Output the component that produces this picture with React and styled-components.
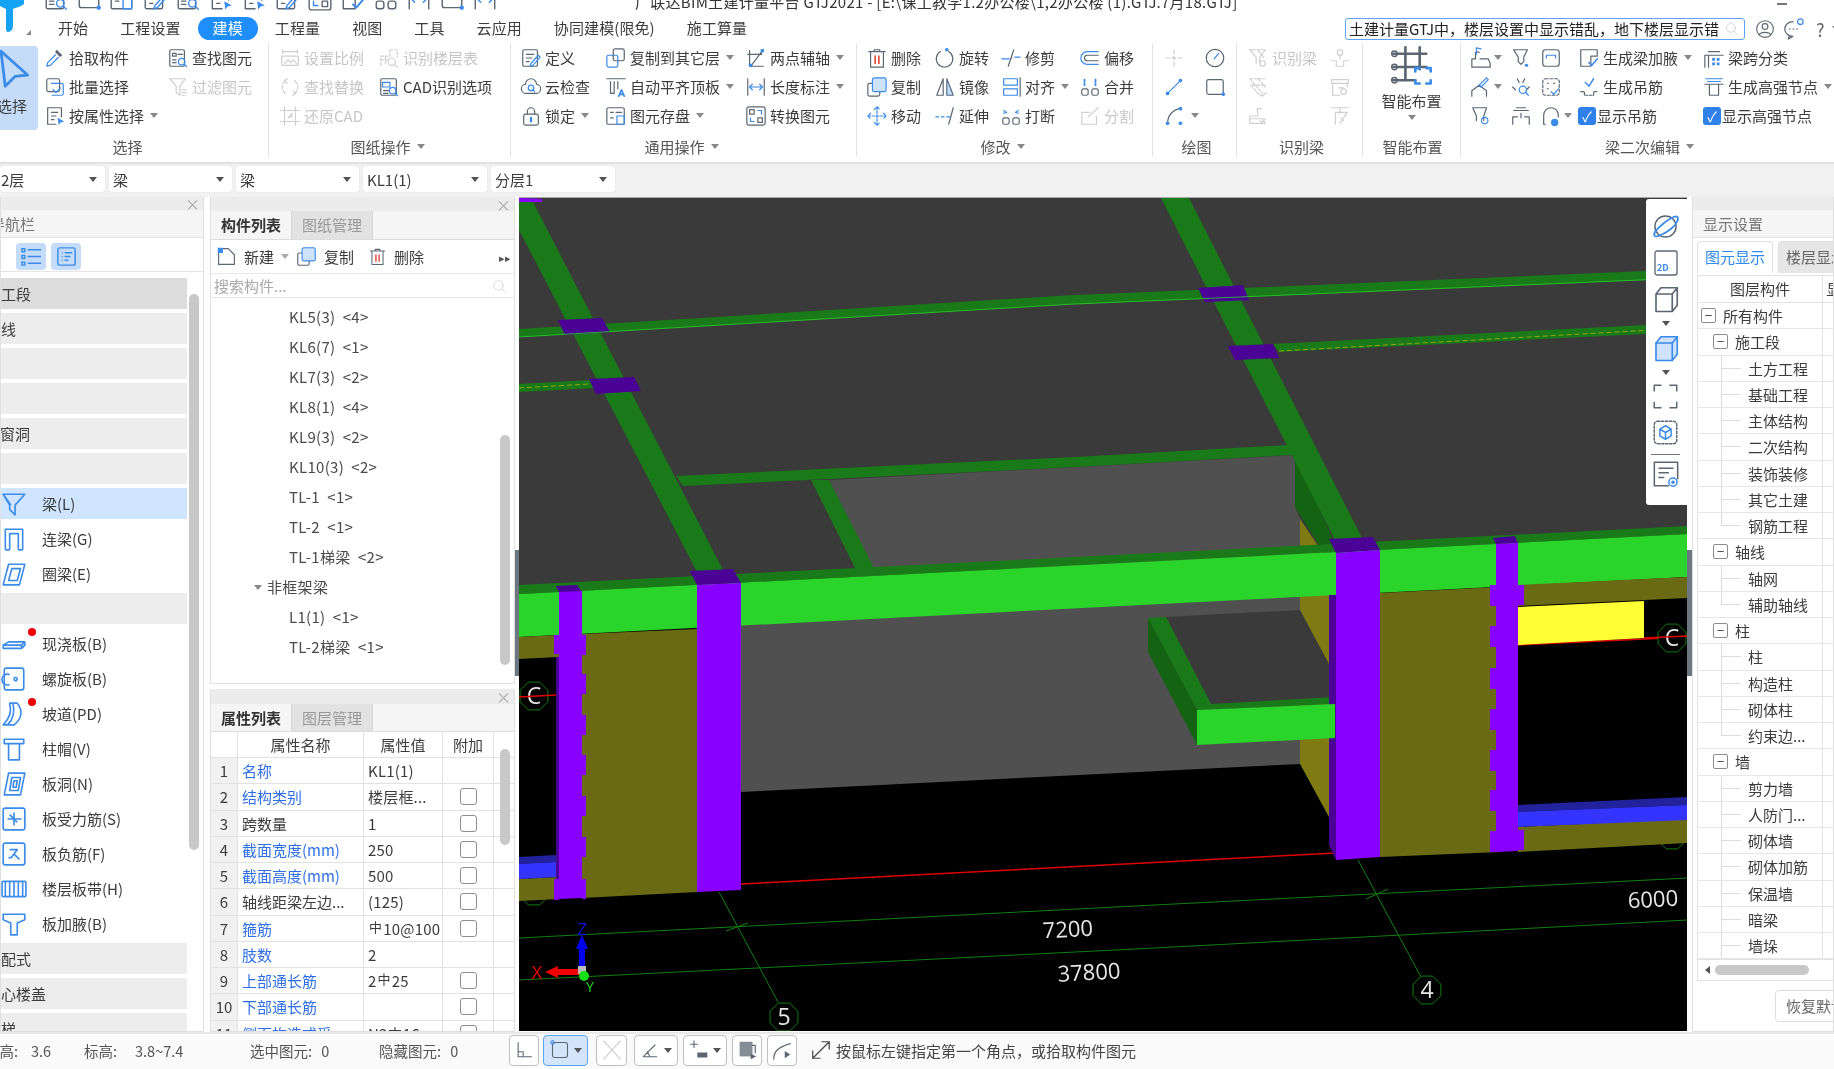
import React from 'react'
import styled, { createGlobalStyle } from 'styled-components'

const GlobalStyle = createGlobalStyle`
  html, body { margin: 0; padding: 0; background: #fff; }
  body { font-family: "Noto Sans CJK SC", "Noto Sans", sans-serif; font-size: 15px; color: #3c3c3c; }
  * { box-sizing: border-box; }
`

const Page = styled.div`
  width: 1834px;
  height: 1069px;
  overflow: hidden;
  position: relative;
  display: flex;
  flex-direction: column;
  background: #fff;
  filter: blur(0.35px);
`

/* ---------- icons ---------- */
const Svg = styled.svg`
  width: ${(p) => p.$s || 22}px;
  height: ${(p) => p.$s || 22}px;
  flex: none;
  fill: none;
  stroke: currentColor;
  stroke-width: 1.3;
  stroke-linecap: round;
  stroke-linejoin: round;
  color: ${(p) => (p.$off ? '#cfcfcf' : '#5b6672')};
  --b: ${(p) => (p.$off ? '#cfcfcf' : '#3b8bea')};
  .b { stroke: var(--b); }
  .f { fill: var(--b); stroke: none; }
  .l { fill: ${(p) => (p.$off ? '#eee' : '#cfe2fb')}; }
  .r { stroke: #e0463c; }
  .d { fill: currentColor; stroke: none; }
`

const icons = {
  pick: <><path d="M14 3l6 6-2.5 2-5.5-5.5z" className="d" /><path className="b" d="M12.5 8.5L4 17l-1 4 4-1 8.5-8.5" /></>,
  batch: <><rect x="3" y="3" width="14" height="14" rx="2" /><path className="b" d="M8 8h11a2 2 0 012 2v9a2 2 0 01-2 2H9M10 15l3 3 5-5" /></>,
  attr: <><path d="M4 3h15v10M4 3v18h9M8 8h7M8 12h5M8 16h3" /><path className="f" d="M15 14l7 4-4 1-2 3z" /></>,
  findel: <><rect x="3" y="3" width="16" height="18" rx="1.5" /><rect x="6" y="7" width="4" height="3" /><path d="M12 8h5M6 14h4M6 17h4" /><circle className="b" cx="16" cy="16" r="3.5" /><path className="b" d="M19 19l2.5 2.5" /></>,
  filter: <><path d="M3 3h17l-6 8v10l-4-3v-7z" /><path d="M16 15h5M16 18h5M16 21h4" /></>,
  scale: <><path d="M4 5h16M4 3v4M20 3v4M3 10h18v10H3z" /><path d="M6 18l4-4 3 3 3-3 3 4" /></>,
  floortab: <><path d="M3 20V10h10V3M3 14h10M8 10v10M13 3h8v8" strokeDasharray="3 2" /><circle cx="15" cy="16" r="4" /><path d="M18 19l3 3" /></>,
  replace: <><path d="M7 5a9 9 0 000 14M17 5a9 9 0 010 14" strokeDasharray="4 2" /><path d="M9 3L6 5l3 3M15 21l3-2-3-3" /></>,
  cadopt: <><rect x="3" y="3" width="17" height="18" rx="1.5" /><path className="b" d="M5 7h8v5H5z" /><path d="M6 16h6M6 19h5" /><circle className="b" cx="16" cy="16" r="3.5" /><path className="b" d="M19 19l2.5 2.5" /></>,
  cadback: <><path d="M6 2v20M18 2v20M2 6h20M2 18h20" /><path d="M10 14l4-5v4h-3" /></>,
  define: <><rect x="3" y="3" width="16" height="18" rx="1.5" /><path d="M7 8h8M7 12h6M7 16h3" /><path className="b" d="M20 9l-8 9-1 3 3-1 8-9z" /></>,
  cloud: <><path d="M7 19a5 5 0 01-1-10 6 6 0 0112 0 5 5 0 01-1 10z" /><circle className="b" cx="12" cy="13" r="3" /><path className="b" d="M14 15l2 2" /></>,
  lock: <><rect x="4" y="10" width="16" height="12" rx="2" /><path d="M8 10V7a4 4 0 018 0v3" /><path className="b" d="M12 14v4" strokeWidth="2.5" /></>,
  copyfloor: <><rect className="b" x="2" y="9" width="12" height="13" rx="2" /><rect x="9" y="2" width="12" height="13" rx="2" /></>,
  autoflat: <><path d="M2 3h20M6 6v13h4V6M14 6v8" /><path className="b" d="M15 22l3-7 3 7M16 20h4" strokeWidth="1.8" /></>,
  saveel: <><rect x="2" y="3" width="19" height="18" rx="1.5" /><path d="M6 8h3M12 8h6M6 14h3" /><rect className="b" x="13" y="12" width="8" height="9" /></>,
  twoaxis: <><path d="M5 4v17h15M3 8h15V3M7 20L19 4" /><circle className="f" cx="19" cy="4" r="2" /><circle className="f" cx="6" cy="20" r="2" /></>,
  dim: <><path d="M3 3v18M21 3v18" /><path className="b" d="M5 12h14M8 9l-3 3 3 3M16 9l3 3-3 3" /></>,
  convert: <><rect x="2" y="2" width="20" height="20" rx="2" /><rect x="5" y="5" width="5" height="5" /><rect x="14" y="14" width="5" height="5" /><path className="b" d="M14 6h4v4M10 18H6v-4" /></>,
  del: <><path d="M3 5h18M9 5V3h6v2M5 5v17h14V5" /><path className="r" d="M10 10v8M14 10v8" strokeWidth="1.8" /></>,
  rotate: <><path d="M16 5a9 9 0 11-9 0" /><circle className="f" cx="14" cy="3" r="2" /></>,
  trim: <><path className="b" d="M2 13h8M16 11h6" /><path d="M15 3L9 21M12 12h1" /></>,
  offset: <><path className="b" d="M21 5H9a7 7 0 000 14h12" /><path d="M21 9H9a3 3 0 000 6h12" /></>,
  copy: <><rect x="2" y="8" width="13" height="14" rx="2" /><rect className="b l" x="7" y="2" width="15" height="15" rx="2" /></>,
  mirror: <><path d="M10 3L3 21h7zM14 3l7 18h-7z" /><path className="f" d="M14 3l7 18h-7z" opacity=".3" /></>,
  align: <><rect className="b" x="4" y="3" width="15" height="7" /><rect className="b" x="4" y="14" width="15" height="7" /><path d="M22 2v20" /></>,
  merge: <><rect x="3" y="14" width="7" height="7" rx="2" /><rect x="14" y="14" width="7" height="7" rx="2" /><path className="b" d="M6 4v6M18 4v6" strokeWidth="2" strokeDasharray="2 2" /></>,
  move: <><path className="b" d="M12 2v20M2 12h20M9 5l3-3 3 3M9 19l3 3 3-3M5 9l-3 3 3 3M19 9l3 3-3 3" strokeDasharray="3 1.5" /></>,
  extend: <><path className="b" d="M2 13h3M8 13h3M14 13h3" /><path d="M21 3l-5 18" /></>,
  cutoff: <><rect x="3" y="14" width="7" height="7" rx="2" /><rect x="14" y="14" width="7" height="7" rx="2" /><path className="b" d="M4 6l3 2M20 6l-3 2M4 9l3-1M20 9l-3-1" /></>,
  split: <><path d="M19 12v9H3V8h9" /><path d="M21 3l-9 8-2 2" /></>,
  cross: <><path d="M12 3v5M12 16v5M3 12h5M16 12h5" /><circle cx="12" cy="12" r="2" className="d" /></>,
  gauge: <><circle cx="12" cy="12" r="9.5" /><path className="b" d="M11 13l5-6" /></>,
  line: <><path className="b" d="M5 19L19 5" /><circle className="f" cx="5" cy="19" r="2" /><circle className="f" cx="19" cy="5" r="2" /></>,
  rect: <><rect x="3" y="4" width="18" height="16" rx="2" /><circle className="f" cx="21" cy="20" r="2" /></>,
  arc: <><path d="M5 20C5 11 11 5 19 4" /><circle className="f" cx="5" cy="20" r="2" /><circle className="f" cx="19" cy="4" r="2" /><circle className="f" cx="19" cy="20" r="2" /></>,
  idbeam: <><path d="M3 3h17l-6 8v6M3 3l7 8v7M12 4l6 7" /><circle cx="17" cy="18" r="3" /></>,
  idb2: <><path d="M3 3h17M6 10h14M3 3l14 16M12 3l8 9M4 10l9 10" strokeDasharray="3 2" /><path d="M14 20l3 2 4-4" /></>,
  idb3: <><path d="M3 20v-8h9l-1-8 5 0M3 15h14l3 5H3M14 17l2 2 4-4" /></>,
  hook: <><circle cx="12" cy="6" r="3" /><path d="M3 15h5v6h8v-6h5" strokeDasharray="3 1.5" /><path d="M12 9v4" /></>,
  boxq: <><path d="M3 4h18v4H3zM4 8v13h8M20 8v4M10 13h6" /><circle cx="16" cy="17" r="3" /></>,
  tdraw: <><path d="M3 3h18M12 3v6M7 8v13M7 8h13l-4 6-4 6" /><path d="M13 14l3 3" /></>,
  gen1: <><path d="M2 22v-9h4V6a4 4 0 014 0M11 13h9l2 5v4H2" /><path className="b" d="M7 1v7M7 1l5 1" /></>,
  gen2: <><path d="M2 22v-6l8-6 8 6v6" /><path className="b" d="M10 10l8-8 2 2-8 8z" /></>,
  gen3: <><path d="M4 3h15l-4 8v5l-3 3-3-3v-5z" /><circle cx="18" cy="20" r="1.8" className="f" /></>,
  gen4: <><rect x="3" y="3" width="18" height="18" rx="3" /><path className="b" d="M7 9h10M7 9v3M17 9v3" /></>,
  gen5: <><path d="M3 12l3 3M21 12l-3 3M8 3l2 4M16 3l-2 4" /><circle className="b" cx="14" cy="15" r="4" /><path className="b" d="M17 18l3 3" /></>,
  gen6: <><rect x="3" y="3" width="18" height="18" rx="3" strokeDasharray="3 2" /><path d="M8 8h1M15 8h1M8 14h1" /><path className="b" d="M12 17l3 3 5-6" /></>,
  gen7: <><path d="M3 3h15l-3 9v5M3 3l4 9v5" /><circle className="b" cx="16" cy="17" r="3.5" /></>,
  gen8: <><path d="M4 6h16M7 3h10M3 21v-8h5M21 21v-8h-5M12 9v5" /></>,
  gen9: <><path d="M4 21V11a8 8 0 0116 0v2M4 21h2" /><circle className="f" cx="16" cy="19" r="4" /></>,
  haunch: <><path d="M3 3h18v7h-7v11H3z" /><path className="b" d="M12 17l3 3 6-7" strokeWidth="1.8" /></>,
  genhang: <><path d="M3 17h4v4h10v-4h4" strokeDasharray="3 1.5" /><path className="b" d="M8 7l4 4 5-8" strokeWidth="1.6" /></>,
  span: <><path d="M2 22V9h20M6 5h12M6 9v13" /><path className="f" d="M10 12h3v3h-3zM15 12h3v3h-3zM10 17h3v3h-3zM15 17h3v3h-3z" /></>,
  strong: <><path className="b" d="M3 3h18M5 6h14" /><path d="M2 9h20M7 9v12h10V9" /></>,
  logoCube: <><path d="M4 8l4-5h13v14l-4 5H4zM4 8h13v14M17 8l4-5" /></>,
}

const Icon = ({ name, off, s }) => (
  <Svg viewBox="0 0 24 24" $off={off} $s={s}>{icons[name]}</Svg>
)

/* ---------- title + menu ---------- */
const TitleBar = styled.div`
  height: 17px;
  flex: none;
  overflow: hidden;
  display: flex;
  background: #fff;
  padding-left: 43px;
`
const QuickIcons = styled.div`
  display: flex;
  gap: 7px;
  margin-top: -14px;
  width: 592px;
  flex: none;
  color: #5b6672;
`
const TitleText = styled.div`
  margin-top: -9px;
  font-size: 15px;
  letter-spacing: 0.28px;
  white-space: nowrap;
  flex: 1;
  color: #333;
`
const Minimize = styled.div`
  width: 10px;
  height: 2px;
  background: #777;
  margin: 3px 47px 0 0;
`
const LogoMark = styled.svg`
  position: absolute;
  left: 0;
  top: 0;
  width: 24px;
  height: 34px;
`
const LogoCorner = styled.span`
  position: absolute;
  left: 26px;
  top: 30px;
  border-left: 5px solid transparent;
  border-bottom: 5px solid #888;
`
const Menu = styled.div`
  height: 23px;
  flex: none;
  display: flex;
  align-items: center;
  padding-left: 42px;
  background: #fff;
`
const MenuTab = styled.div`
  height: 23px;
  padding: 0 15px;
  margin: 0 1px;
  line-height: 22px;
  letter-spacing: 0.1px;
  border-radius: 12px;
  white-space: nowrap;
  color: ${(p) => (p.$on ? '#fff' : '#3c3c3c')};
  background: ${(p) => (p.$on ? '#1e8efb' : 'transparent')};
`
const SearchBox = styled.div`
  margin-left: auto;
  width: 400px;
  height: 22px;
  border: 1.5px solid #5aa5f5;
  border-radius: 3px;
  display: flex;
  align-items: center;
  padding: 0 5px 0 3px;
  color: #222;
  overflow: hidden;
  white-space: nowrap;
  justify-content: space-between;
`
const SearchText = styled.span`
  overflow: hidden;
  width: 370px;
`
const MenuIcons = styled.div`
  width: 89px;
  flex: none;
  display: flex;
  align-items: center;
  gap: 7px;
  padding-left: 10px;
  color: #666;
`
const HelpMark = styled.span`
  margin-left: 5px;
  font-size: 18px;
`

/* ---------- ribbon ---------- */
const Ribbon = styled.div`
  height: 124px;
  flex: none;
  display: flex;
  background: #fff;
  border-bottom: 2px solid #e2e2e2;
`
const GroupBox = styled.div`
  width: ${(p) => p.$w}px;
  flex: none;
  display: flex;
  flex-direction: column;
  position: relative;
  border-right: ${(p) => (p.$last ? 'none' : '1.5px solid #e4e4e4')};
  margin: 3px 0 5px;
`
const GroupBody = styled.div`
  height: 90px;
  flex: none;
  display: flex;
  padding-left: ${(p) => p.$pad || 0}px;
  align-items: flex-start;
`
const GroupTitle = styled.div`
  flex: 1;
  display: flex;
  align-items: center;
  justify-content: center;
  gap: 6px;
  padding-top: 2px;
  padding-right: ${(p) => Math.max(p.$shift || 0, 0)}px;
  padding-left: ${(p) => Math.max(-(p.$shift || 0), 0)}px;
  color: #555;
`
const Caret = styled.span`
  display: inline-block;
  width: 0;
  height: 0;
  flex: none;
  border-left: 4px solid transparent;
  border-right: 4px solid transparent;
  border-top: 5px solid ${(p) => p.$c || '#888'};
`
const Col = styled.div`
  width: ${(p) => p.$w}px;
  flex: none;
  display: flex;
  flex-direction: column;
`
const ToolRow = styled.div`
  height: 29px;
  display: flex;
  align-items: center;
  gap: ${(p) => p.$gap ?? 3}px;
  white-space: nowrap;
  color: ${(p) => (p.$off ? '#c6c6c6' : '#3c3c3c')};
`
const BigSelect = styled.div`
  width: 38px;
  height: 84px;
  margin: 3px 6px 0 0;
  background: #c4dcf7;
  border-radius: 0 4px 4px 0;
  display: flex;
  flex-direction: column;
  align-items: center;
  overflow: hidden;
  padding-top: 1px;
  white-space: nowrap;
`
const BigLabel = styled.div`
  margin-top: 6px;
  margin-left: -14px;
`
const BigTool = styled.div`
  width: 100%;
  height: 90px;
  display: flex;
  flex-direction: column;
  align-items: center;
`
const BigToolLabel = styled.div`
  margin-top: 1px;
  line-height: 22px;
`
const CheckBox = styled.span`
  width: 18px;
  height: 18px;
  border-radius: 3px;
  background: #2f80e8;
  color: #fff;
  font-size: 14px;
  line-height: 18px;
  text-align: center;
  flex: none;
`

const Tool = ({ icon, label, caret, off }) => (
  <ToolRow $off={off}>
    <Icon name={icon} off={off} />
    {label && <span>{label}</span>}
    {caret && <Caret style={{ marginLeft: 3 }} />}
  </ToolRow>
)

const Group = ({ w, title, pad, shift, caret, last, children }) => (
  <GroupBox $w={w} $last={last}>
    <GroupBody $pad={pad}>{children}</GroupBody>
    <GroupTitle $shift={shift}>
      {title}
      {caret && <Caret />}
    </GroupTitle>
  </GroupBox>
)

/* ---------- selectors ---------- */
const SelectorBar = styled.div`
  height: 33px;
  flex: none;
  background: #f1f1f1;
  display: flex;
  gap: 4px;
  padding-top: 2px;
  align-items: flex-start;
`
const Selector = styled.div`
  width: ${(p) => p.$w}px;
  height: 26px;
  background: #fff;
  border-radius: 3px;
  display: flex;
  align-items: center;
  justify-content: space-between;
  padding: 0 8px 0 ${(p) => p.$pl ?? 4}px;
  box-shadow: 0 0 1px #ccc;
`

/* ---------- main ---------- */
const Main = styled.div`
  flex: 1;
  min-height: 0;
  display: flex;
  background: #fff;
`
const Panel = styled.div`
  width: ${(p) => p.$w}px;
  flex: ${(p) => (p.$grow ? 1 : 'none')};
  ${(p) => p.$h && `height: ${p.$h}px;`}
  min-height: 0;
  position: relative;
  overflow: hidden;
  display: flex;
  flex-direction: column;
  border: 1px solid #e0e0e0;
  border-top: none;
  background: #fff;
`
const Strip = styled.div`
  height: ${(p) => p.$h || 13}px;
  flex: none;
  background: #ececec;
  display: flex;
  justify-content: flex-end;
  align-items: center;
  padding-right: 3px;
  color: #a8a8a8;
  font-size: 15px;
  line-height: 13px;
`
const PanelHead = styled.div`
  height: 28px;
  flex: none;
  background: #f5f5f5;
  line-height: 28px;
  padding-left: ${(p) => p.$pl ?? 0}px;
  text-indent: ${(p) => p.$indent ?? 0}px;
  white-space: nowrap;
  color: #777;
  border-bottom: 1px solid #e4e4e4;
`
const Tabs = styled.div`
  height: ${(p) => p.$h || 29}px;
  flex: none;
  display: flex;
  background: #f5f5f5;
  border-bottom: 1px solid #ddd;
`
const Tab = styled.div`
  width: 81px;
  text-align: center;
  line-height: 28px;
  font-weight: ${(p) => (p.$on ? 700 : 400)};
  color: ${(p) => (p.$on ? '#333' : '#999')};
  background: ${(p) => (p.$on ? '#f5f5f5' : '#e2e2e2')};
  border-right: 1px solid #d6d6d6;
`
const ScrollThumb = styled.div`
  position: absolute;
  top: ${(p) => p.$top}px;
  right: ${(p) => p.$right}px;
  width: 10px;
  height: ${(p) => p.$h}px;
  background: #c8c8c8;
  border-radius: 5px;
`
const ViewRow = styled.div`
  height: 34px;
  flex: none;
  display: flex;
  gap: 5px;
  padding: 5px 0 0 15px;
  border-bottom: 1px solid #e4e4e4;
`
const ViewBtn = styled.div`
  width: 30px;
  height: 27px;
  background: #c4dcf7;
  border-radius: 4px;
  display: flex;
  align-items: center;
  justify-content: center;
`
const NavList = styled.div`
  flex: 1;
  min-height: 0;
  padding-top: 6px;
`
const NavBand = styled.div`
  width: 186px;
  height: 31px;
  margin-bottom: 4px;
  background: ${(p) => (p.$dark ? '#dcdcdc' : '#ededed')};
  line-height: 31px;
  text-indent: ${(p) => p.$indent || 0}px;
  white-space: nowrap;
  overflow: hidden;
`
const NavItem = styled.div`
  width: 186px;
  height: 31px;
  margin-bottom: 4px;
  display: flex;
  align-items: center;
  gap: 15px;
  position: relative;
  background: ${(p) => (p.$on ? '#cfe5ff' : 'transparent')};
`
const RedDot = styled.span`
  position: absolute;
  left: 27px;
  top: 0;
  width: 8px;
  height: 8px;
  border-radius: 50%;
  background: #ee0000;
`
const CompToolbar = styled.div`
  height: 34px;
  flex: none;
  display: flex;
  align-items: center;
  padding-left: 5px;
  border-bottom: 1px solid #e8e8e8;
  position: relative;
`
const CompBtn = styled.div`
  display: flex;
  align-items: center;
  gap: 7px;
  width: ${(p) => p.$w}px;
  flex: none;
`
const MoreBtn = styled.div`
  margin-left: auto;
  margin-right: 3px;
  width: 13px;
  height: 24px;
  color: #555;
  font-size: 11px;
  line-height: 24px;
  text-align: center;
  white-space: nowrap;
`
const CompSearch = styled.div`
  height: 24px;
  flex: none;
  display: flex;
  justify-content: space-between;
  align-items: center;
  padding: 0 8px 0 3px;
  color: #aaa;
  border-bottom: 1px solid #e4e4e4;
`
const CompList = styled.div`
  flex: 1;
  min-height: 0;
  padding-top: 4px;
`
const CompRow = styled.div`
  height: 30px;
  line-height: 30px;
  padding-left: ${(p) => (p.$head ? 43 : 78)}px;
  white-space: pre;
  letter-spacing: 0.3px;
  display: flex;
  align-items: center;
  gap: 5px;
  color: #4a4a4a;
`
const PropHead = styled.div`
  display: grid;
  grid-template-columns: 27px 126px 79px 51px;
  height: 26px;
  flex: none;
  text-align: center;
  line-height: 25px;
  border-bottom: 1px solid #e2e2e2;
  & > div { border-right: 1px solid #e2e2e2; }
`
const PropRow = styled.div`
  display: grid;
  grid-template-columns: 27px 126px 79px 51px;
  height: 26.25px;
  flex: none;
  line-height: 25px;
  border-bottom: 1px solid #e2e2e2;
`
const PropNum = styled.div`
  background: #f1f1f1;
  text-align: center;
  border-right: 1px solid #e2e2e2;
`
const PropName = styled.div`
  padding-left: 4px;
  white-space: nowrap;
  overflow: hidden;
  border-right: 1px solid #e2e2e2;
  color: ${(p) => (p.$link ? '#2f6fe6' : '#3c3c3c')};
`
const PropVal = styled.div`
  padding-left: 4px;
  white-space: nowrap;
  overflow: hidden;
  letter-spacing: 0.2px;
  border-right: 1px solid #e2e2e2;
`
const Rebar = styled.span`
  font-size: 13px;
  margin: 0 1px;
  position: relative;
  top: -3px;
`
const PropCheckCell = styled.div`
  border-right: 1px solid #e2e2e2;
  display: flex;
  align-items: center;
  justify-content: center;
`
const PropCheck = styled.span`
  width: 17px;
  height: 17px;
  border: 1.3px solid #8e8e8e;
  border-radius: 3px;
`
const MidColumn = styled.div`
  width: 305px;
  margin-left: 6px;
  flex: none;
  display: flex;
  flex-direction: column;
  gap: 5px;
`
const Splitter = styled.div`
  width: ${(p) => p.$w}px;
  flex: none;
  display: flex;
  align-items: center;
  padding-bottom: 4px;
`
const SplitGrip = styled.div`
  width: 100%;
  height: 126px;
  background: #6b7680;
`
const Viewport = styled.div`
  width: 1168px;
  flex: none;
  position: relative;
  background: #000;
  border-top: 1px solid #aaa;
  height: 834px;
`
const Scene = styled.svg`
  display: block;
  width: 1168px;
  height: 833px;
`
const SceneText = styled.text`
  font-family: "Open Sans", "Noto Sans", sans-serif;
  fill: ${(p) => p.$c || '#e6e6e6'};
  font-size: ${(p) => p.$s || 22}px;
  text-anchor: middle;
`
const FloatBar = styled.div`
  position: absolute;
  right: 0;
  top: 1px;
  width: 41px;
  height: 306px;
  background: #fff;
  border-radius: 3px 0 0 3px;
  display: flex;
  flex-direction: column;
  align-items: center;
  padding: 10px 2px 0 0;
`
const FloatSlot = styled.div`
  height: ${(p) => p.$h}px;
  display: flex;
  align-items: center;
  justify-content: center;
  flex: none;
`
const FloatRule = styled.div`
  width: 29px;
  height: 1px;
  flex: none;
  background: #777;
  margin: 3px 0;
`
const TreeWrap = styled.div`
  margin: 2px 0 0 4px;
  height: 684px;
  flex: none;
  border: 1px solid #e2e2e2;
  border-right: none;
  border-bottom: none;
  display: flex;
  flex-direction: column;
  overflow: hidden;
`
const TreeHead = styled.div`
  height: 27px;
  flex: none;
  display: flex;
  line-height: 26px;
  white-space: nowrap;
  border-bottom: 1px solid #e2e2e2;
`
const TreeCell = styled.div`
  width: 125px;
  flex: none;
  text-align: center;
  border-right: 1px solid #e2e2e2;
`
const TreeRow = styled.div`
  height: 26.25px;
  flex: none;
  display: flex;
  border-bottom: 1px solid #e6e6e6;
  position: relative;
  white-space: nowrap;
`
const TreeLabel = styled.div`
  width: 125px;
  flex: none;
  display: flex;
  align-items: center;
  gap: 7px;
  padding-left: ${(p) => p.$pl}px;
  line-height: 25px;
  overflow: hidden;
  border-right: 1px solid #e2e2e2;
`
const Expander = styled.span`
  width: 15px;
  height: 15px;
  border: 1px solid #8c8c8c;
  border-radius: 2px;
  background: #fff;
  font-size: 13px;
  line-height: 11px;
  text-align: center;
  flex: none;
`
const TreeH = styled.span`
  position: absolute;
  left: 23px;
  top: 12px;
  width: 20px;
  height: 1px;
  background: #ddd;
`
const TreeV = styled.span`
  position: absolute;
  left: 23px;
  top: 0;
  bottom: ${(p) => (p.$end ? 13 : 0)}px;
  width: 1px;
  background: #ddd;
`
const TreeBar = styled.div`
  height: 22px;
  flex: none;
  display: flex;
  align-items: center;
  gap: 5px;
  padding-left: 7px;
  margin-left: 4px;
  border: 1px solid #e2e2e2;
  border-right: none;
`
const BarArrow = styled.span`
  width: 0;
  height: 0;
  border-top: 4px solid transparent;
  border-bottom: 4px solid transparent;
  border-right: 5px solid #555;
`
const BarThumb = styled.span`
  width: 94px;
  height: 10px;
  background: #c8c8c8;
  border-radius: 5px;
`
const RestoreBtn = styled.div`
  margin: 9px 0 0 82px;
  width: 90px;
  height: 32px;
  flex: none;
  border: 1px solid #dedede;
  border-radius: 4px;
  line-height: 30px;
  padding-left: 10px;
  white-space: nowrap;
  color: #666;
`
const TabsR = styled.div`
  display: flex;
  gap: 5px;
  padding: 3px 0 0 4px;
  height: 35px;
  flex: none;
  white-space: nowrap;
`
const TabR = styled.div`
  width: ${(p) => (p.$on ? 76 : 90)}px;
  flex: none;
  text-align: ${(p) => (p.$on ? 'center' : 'left')};
  padding-left: ${(p) => (p.$on ? 0 : 7)}px;
  line-height: 30px;
  border-radius: 4px 4px 0 0;
  color: ${(p) => (p.$on ? '#2f8af0' : '#666')};
  background: ${(p) => (p.$on ? '#fff' : '#e6e6e6')};
  border: 1px solid #e0e0e0;
  border-bottom: none;
`

/* ---------- status ---------- */
const Status = styled.div`
  height: 37px;
  flex: none;
  display: flex;
  align-items: center;
  background: #fafafa;
  border-top: 2px solid #e8e8e8;
  padding-bottom: 3px;
  white-space: nowrap;
  color: #555;
  font-size: 14.5px;
  overflow: hidden;
`
const StatusText = styled.div`
  width: ${(p) => p.$w}px;
  flex: none;
  word-spacing: 6px;
  text-indent: ${(p) => p.$indent || 0}px;
`
const StatusBtn = styled.div`
  width: ${(p) => p.$w}px;
  height: 31px;
  flex: none;
  margin-right: ${(p) => p.$mr ?? 4}px;
  border: 1px solid ${(p) => (p.$on ? '#5aa5f5' : '#bfbfbf')};
  background: ${(p) => (p.$on ? '#d3e5fb' : '#fff')};
  border-radius: 4px;
  display: flex;
  align-items: center;
  justify-content: center;
  gap: 4px;
`
const Hint = styled.div`
  color: #444;
  font-size: 15px;
  display: flex;
  align-items: center;
  gap: 4px;
  margin-left: 9px;
`

/* ---------- 3d scene data ---------- */
const OLIVE = '#6b6a14'
const OLIVE_L = '#7f7a12'
const G_DARK = '#1a7a1a'
const G_SIDE = '#136313'
const G = '#2ad42a'
const P = '#8800ff'
const P_D = '#4b0096'

const flat = [
  ['#3a3a3a', '519,196 1688,196 1688,532 519,592'],
  ['#505050', '829,478 1075,465 1295,453 1295,505 1300,517 1300,560 874,570'],
  // floor slab beams
  [G_DARK, '519,327 1075,293 1646,269 1688,267 1688,276 1646,278 1075,302 519,335'],
  [G_DARK, '519,382 590,378 596,386 519,390'],
  [G_DARK, '1273,342 1646,323 1688,321 1688,330 1646,332 1279,350'],
  [G_DARK, '676,474 1075,455 1288,443 1308,452 1075,465 683,484'],
  [G_DARK, '811,478 829,478 874,566 856,568'],
  [G_SIDE, '1295,455 1295,505 1322,548 1338,548'],
  [G_DARK, '519,200 533,200 724,570 697,570 519,228'],
  [G_DARK, '1161,196 1189,196 1364,540 1336,540'],
  // purple caps where beams cross
  [P_D, '558,318 602,316 610,330 565,333'],
  [P_D, '1198,286 1243,283 1249,298 1205,300'],
  [P_D, '589,377 634,375 641,389 596,392'],
  [P_D, '1228,344 1273,342 1279,356 1235,358'],
  [P, '519,196 542,197 542,200 519,200'],
]

const lower = [
  ['#505050', '741,600 1300,570 1300,762 741,790'],
  [OLIVE_L, '1300,517 1329,560 1329,815 1300,762'],
  ['#3a3a3a', '1166,615 1300,608 1329,662 1329,697 1211,703'],
]

const front = [
  [G_DARK, '519,583 1688,524 1688,532 519,592'],
  [G, '519,592 1688,532 1688,575 519,635'],
  // walls
  [OLIVE, '519,635 559,633 559,655 519,657'],
  [OLIVE, '519,877 559,875 559,897 519,899'],
  [OLIVE, '582,632 697,627 697,890 582,896'],
  [OLIVE, '1380,591 1500,585 1500,850 1380,855'],
  [OLIVE, '1518,583 1688,575 1688,596 1518,604'],
  [OLIVE, '1518,825 1688,817 1688,841 1518,850'],
  // yellow + blue
  ['#ffff33', '1518,605 1644,599 1644,636 1518,643'],
  ['#22229c', '1518,803 1688,795 1688,803 1518,810'],
  ['#3434ff', '1518,810 1688,803 1688,818 1518,825'],
  ['#22229c', '519,855 556,853 556,860 519,862'],
  ['#3434ff', '519,862 556,860 556,875 519,877'],
  // mini beam
  [G_DARK, '1148,616 1166,615 1211,702 1335,695 1335,702 1197,708'],
  [G_SIDE, '1148,616 1148,650 1197,743 1197,708'],
  // column side
  [P_D, '1329,593 1336,593 1336,858 1329,843'],
  [G, '1197,708 1335,702 1335,736 1197,743'],
  // columns
  [P_D, '690,569 733,567 741,581 697,583'],
  [P_D, '556,584 577,583 582,590 559,590'],
  [P_D, '1329,537 1373,535 1380,548 1336,551'],
  [P_D, '1493,536 1515,534 1518,541 1496,542'],
  [P, '697,583 741,581 741,888 697,890'],
  [P, '1336,551 1380,548 1380,855 1336,858'],
  [P, '559,590 582,589 582,896 559,897'],
  [P, '1496,542 1518,541 1518,849 1496,850'],
  [P, '554,633 559,633 559,652 554,652'],
  [P, '554,877 559,877 559,898 554,898'],
  [P, '1518,583 1524,583 1524,603 1518,603'],
  [P, '1518,828 1524,828 1524,848 1518,848'],
  [P_D, '556,655 559,655 559,877 556,877'],
]

const teethB = [633, 672, 713, 753, 794, 835, 877]
const teethD = [583, 624, 666, 707, 748, 788, 829]

const octagon = (cx, cy, r) =>
  Array.from({ length: 8 }, (_, i) => {
    const a = (Math.PI / 4) * i + Math.PI / 8
    return `${(cx + r * Math.cos(a)).toFixed(1)},${(cy + r * Math.sin(a)).toFixed(1)}`
  }).join(' ')

const Bubble = ({ x, y, t }) => (
  <g>
    <polygon points={octagon(x, y, 15)} fill="#000" stroke="#0f7f0f" strokeWidth="1" />
    <SceneText x={x} y={y + 8} $s={23}>{t}</SceneText>
  </g>
)

const Polys = ({ list }) => list.map(([f, p], i) => <polygon key={i} fill={f} points={p} />)

const Scene3D = () => (
  <Scene viewBox="519 196 1168 833">
    <rect x="519" y="196" width="1169" height="834" fill="#000" />
    <Polys list={flat} />
    <line x1="519" y1="335" x2="1075" y2="302" stroke={G} strokeWidth=".8" />
    <line x1="1075" y1="302" x2="1688" y2="276" stroke={G} strokeWidth=".8" />
    <line x1="519" y1="386" x2="589" y2="382" stroke="#93a312" strokeDasharray="5 3" />
    <line x1="1279" y1="349" x2="1688" y2="326" stroke="#93a312" strokeDasharray="5 3" />
    <Polys list={lower} />

    {/* grid lines on the floor */}
    <polyline points="519,936 1135,904 1688,876" stroke="#0f7f0f" fill="none" />
    <polyline points="519,978 1135,947 1688,918" stroke="#0f7f0f" fill="none" />
    <line x1="741" y1="882" x2="1336" y2="851" stroke="#e00000" strokeWidth="1.5" />
    <line x1="1518" y1="643" x2="1688" y2="635" stroke="#e00000" strokeWidth="1.5" />
    <line x1="719" y1="890" x2="778" y2="1000" stroke="#0f7f0f" />
    <line x1="1358" y1="858" x2="1421" y2="975" stroke="#0f7f0f" />
    <line x1="726" y1="929" x2="748" y2="921" stroke="#0f7f0f" />
    <line x1="1366" y1="897" x2="1388" y2="887" stroke="#0f7f0f" />
    <Bubble x={784} y={1015} t="5" />
    <Bubble x={1427} y={988} t="4" />
    <Bubble x={534} y={694} t="C" />
    <Bubble x={1672} y={636} t="C" />
    <line x1="519" y1="695" x2="556" y2="693" stroke="#e00000" strokeWidth="1.5" />
    <line x1="1644" y1="636" x2="1688" y2="634" stroke="#e00000" strokeWidth="1.5" />
    <polygon points={octagon(534, 889, 15)} fill="#000" stroke="#0f7f0f" />
    <polygon points={octagon(1672, 833, 15)} fill="#000" stroke="#0f7f0f" />

    <Polys list={front} />
    {teethB.map((y) => <rect key={y} x="582" y={y} width="4" height="20" fill={P} />)}
    {teethD.map((y) => <rect key={y} x="1490" y={y} width="6" height="21" fill={P} />)}

    <SceneText x={1068} y={935} transform="rotate(-3 1068 930)">7200</SceneText>
    <SceneText x={1089} y={978} transform="rotate(-3 1089 971)">37800</SceneText>
    <SceneText x={1653} y={905} transform="rotate(-3 1653 898)">6000</SceneText>

    {/* axis gizmo */}
    <rect x="579" y="945" width="6" height="22" fill="#0000f0" />
    <polygon points="582,933 588,947 576,947" fill="#0000f0" />
    <SceneText x={582} y={933} $s={17} $c="#1010e0">Z</SceneText>
    <rect x="556" y="967" width="24" height="6" fill="#f00000" />
    <polygon points="545,970 558,964 558,976" fill="#f00000" />
    <SceneText x={537} y={977} $s={18} $c="#f00000">X</SceneText>
    <rect x="578" y="964" width="8" height="8" fill="#bbb" />
    <circle cx="584" cy="974" r="5" fill="#14e014" />
    <SceneText x={590} y={990} $s={14} $c="#14e014">Y</SceneText>
  </Scene>
)

/* ---------- data ---------- */
const navTop = [
  { band: '施工段', dark: true, indent: -15 },
  { band: '轴线', indent: -15 },
  { band: '' },
  { band: '' },
  { band: '门窗洞', indent: -16 },
  { band: '' },
  { item: '梁(L)', icon: 'beam', on: true },
  { item: '连梁(G)', icon: 'lintel' },
  { item: '圈梁(E)', icon: 'ring' },
  { band: '' },
  { item: '现浇板(B)', icon: 'slab', dot: true },
  { item: '螺旋板(B)', icon: 'spiral' },
  { item: '坡道(PD)', icon: 'ramp', dot: true },
  { item: '柱帽(V)', icon: 'cap' },
  { item: '板洞(N)', icon: 'hole' },
  { item: '板受力筋(S)', icon: 'rebarS' },
  { item: '板负筋(F)', icon: 'rebarF' },
  { item: '楼层板带(H)', icon: 'strip' },
  { item: '板加腋(B)', icon: 'haunchN' },
  { band: '装配式', indent: -15 },
  { band: '空心楼盖', indent: -15 },
  { band: '楼梯', indent: -15 },
]

const navIcons = {
  beam: <path d="M2 3h20L13 13v9l-5-5V13zM2 3l7 10" />,
  lintel: <path d="M4 22V3h16v19M8 22V7h8v15M4 22h4M16 22h4" />,
  ring: <path d="M7 3h15l-5 19H2zM10 7h8l-3 11H7z" />,
  slab: <path d="M2 13l5-3h15v3l-3 3H2zM2 13h17v3M19 13l3-3" />,
  spiral: <><rect x="3" y="2" width="18" height="20" rx="2" /><path d="M8 17a5 5 0 110-9M12 12a1.5 1.5 0 110 .1" /></>,
  ramp: <path d="M2 22C8 16 10 9 8 2h7c5 6 5 14-3 20zM6 22c5-5 7-12 5-20" />,
  cap: <path d="M3 3h18v4H3zM8 7l-3 0M7 7v15h10V7" />,
  hole: <><path d="M7 2h15l-4 20H3z" /><path d="M10 6h8l-2 12H8zM12 9h3l-1 6h-3z" /></>,
  rebarS: <><rect x="2" y="2" width="20" height="20" rx="2" /><path d="M6 12h13M12 6v12M8 8l3 3M15 15l-2-2" /></>,
  rebarF: <><rect x="2" y="2" width="20" height="20" rx="2" /><path d="M8 8h7l-6 8M12 12l5 5M7 16l2-1" /></>,
  strip: <><rect x="1" y="5" width="22" height="14" rx="1" /><path d="M8 5v14M16 5v14M4 5v14M12 5v14M20 5v14" /></>,
  haunchN: <path d="M2 3h20v5l-7 3v11H9V11L2 8zM2 3h20" />,
}

const compRows = [
  'KL5(3)  <4>', 'KL6(7)  <1>', 'KL7(3)  <2>', 'KL8(1)  <4>', 'KL9(3)  <2>', 'KL10(3)  <2>',
  'TL-1  <1>', 'TL-2  <1>', 'TL-1梯梁  <2>',
]

const propRows = [
  { n: 1, name: '名称', link: true, val: 'KL1(1)' },
  { n: 2, name: '结构类别', link: true, val: '楼层框...', cb: true },
  { n: 3, name: '跨数量', val: '1', cb: true },
  { n: 4, name: '截面宽度(mm)', link: true, val: '250', cb: true },
  { n: 5, name: '截面高度(mm)', link: true, val: '500', cb: true },
  { n: 6, name: '轴线距梁左边...', val: '(125)', cb: true },
  { n: 7, name: '箍筋', link: true, val: <><Rebar>中</Rebar>10@100</>, cb: true },
  { n: 8, name: '肢数', link: true, val: '2' },
  { n: 9, name: '上部通长筋', link: true, val: <>2<Rebar>中</Rebar>25</>, cb: true },
  { n: 10, name: '下部通长筋', link: true, val: '', cb: true },
  { n: 11, name: '侧面构造或受...', link: true, val: 'N2中16', cb: true },
]

const tree = [
  ['所有构件', 0], ['施工段', 1], ['土方工程', 2], ['基础工程', 2], ['主体结构', 2], ['二次结构', 2],
  ['装饰装修', 2], ['其它土建', 2], ['钢筋工程', 2, 1], ['轴线', 1], ['轴网', 2], ['辅助轴线', 2, 1],
  ['柱', 1], ['柱', 2], ['构造柱', 2], ['砌体柱', 2], ['约束边...', 2, 1], ['墙', 1], ['剪力墙', 2],
  ['人防门...', 2], ['砌体墙', 2], ['砌体加筋', 2], ['保温墙', 2], ['暗梁', 2], ['墙垛', 2],
]

const BlueSvg = styled.svg`
  width: ${(p) => p.$s || 23}px;
  height: ${(p) => p.$s || 23}px;
  flex: none;
  fill: none;
  stroke: #3b8bea;
  stroke-width: 1.5;
  stroke-linejoin: round;
`

const X = () => <span>×</span>

export default function App() {
  return (
    <Page>
      <GlobalStyle />
      <TitleBar>
        <QuickIcons>
          {['findel', 'rect', 'saveel', 'define', 'findel', 'attr', 'attr', 'define', 'convert', 'haunch', 'merge', 'dim', 'rect', 'dim'].map((n, i) => (
            <Icon key={i} name={n} s={26} />
          ))}
        </QuickIcons>
        <TitleText>广联达BIM土建计量平台 GTJ2021 - [E:\课工教学1.2办公楼\1,2办公楼 (1).GTJ.7月18.GTJ]</TitleText>
        <Minimize />
      </TitleBar>
      <LogoMark viewBox="0 0 24 34">
        <path d="M0 0h24v4c-4 3-9 4-11 5v16c0 4-2 7-5 7-2 0-2-3-2-6V9C4 8 2 7 0 6z" fill="#14a2f2" />
      </LogoMark>
      <LogoCorner />
      <Menu>
        {['开始', '工程设置', '建模', '工程量', '视图', '工具', '云应用', '协同建模(限免)', '施工算量'].map((t) => (
          <MenuTab key={t} $on={t === '建模'}>{t}</MenuTab>
        ))}
        <SearchBox>
          <SearchText>土建计量GTJ中，楼层设置中显示错乱，地下楼层显示错乱</SearchText>
          <Svg viewBox="0 0 24 24" $s={15} $off><circle cx="11" cy="11" r="7" /><path d="M16 16l5 5" /></Svg>
        </SearchBox>
        <MenuIcons>
          <Svg viewBox="0 0 24 24" $s={20}><circle cx="12" cy="12" r="10" /><circle cx="12" cy="9" r="3.5" /><path d="M5 19c2-4 12-4 14 0" /></Svg>
          <Svg viewBox="0 0 24 24" $s={22}><path d="M12 4a9 8 0 100 16l-5 3 1-4" /><circle className="b" cx="20" cy="4" r="3" /><path d="M8 12h1M12 12h1M16 12h1" /></Svg>
          <HelpMark>?</HelpMark>
          <Caret $c="#777" />
        </MenuIcons>
      </Menu>

      <Ribbon>
        <Group w={269} title="选择" shift={13}>
          <BigSelect>
            <BlueSvg viewBox="0 0 24 30" style={{ width: 34, height: 42, marginLeft: -8 }}>
              <path d="M2 3l19 17-9 1-7 7z" strokeWidth="2" />
            </BlueSvg>
            <BigLabel>选择</BigLabel>
          </BigSelect>
          <Col $w={123}>
            <Tool icon="pick" label="拾取构件" />
            <Tool icon="batch" label="批量选择" />
            <Tool icon="attr" label="按属性选择" caret />
          </Col>
          <Col $w={100}>
            <Tool icon="findel" label="查找图元" />
            <Tool icon="filter" label="过滤图元" off />
          </Col>
        </Group>
        <Group w={242} title="图纸操作" pad={10} shift={4} caret>
          <Col $w={99}>
            <Tool icon="scale" label="设置比例" off />
            <Tool icon="replace" label="查找替换" off />
            <Tool icon="cadback" label="还原CAD" off />
          </Col>
          <Col $w={130}>
            <Tool icon="floortab" label="识别楼层表" off />
            <Tool icon="cadopt" label="CAD识别选项" />
          </Col>
        </Group>
        <Group w={346} title="通用操作" pad={9} shift={4} caret>
          <Col $w={85}>
            <Tool icon="define" label="定义" />
            <Tool icon="cloud" label="云检查" />
            <Tool icon="lock" label="锁定" caret />
          </Col>
          <Col $w={140}>
            <Tool icon="copyfloor" label="复制到其它层" caret />
            <Tool icon="autoflat" label="自动平齐顶板" caret />
            <Tool icon="saveel" label="图元存盘" caret />
          </Col>
          <Col $w={100}>
            <Tool icon="twoaxis" label="两点辅轴" caret />
            <Tool icon="dim" label="长度标注" caret />
            <Tool icon="convert" label="转换图元" />
          </Col>
        </Group>
        <Group w={296} title="修改" pad={9} shift={4} caret>
          <Col $w={68}>
            <Tool icon="del" label="删除" />
            <Tool icon="copy" label="复制" />
            <Tool icon="move" label="移动" />
          </Col>
          <Col $w={66}>
            <Tool icon="rotate" label="旋转" />
            <Tool icon="mirror" label="镜像" />
            <Tool icon="extend" label="延伸" />
          </Col>
          <Col $w={79}>
            <Tool icon="trim" label="修剪" />
            <Tool icon="align" label="对齐" caret />
            <Tool icon="cutoff" label="打断" />
          </Col>
          <Col $w={62}>
            <Tool icon="offset" label="偏移" />
            <Tool icon="merge" label="合并" />
            <Tool icon="split" label="分割" off />
          </Col>
        </Group>
        <Group w={84} title="绘图" pad={10} shift={-4}>
          <Col $w={41}>
            <Tool icon="cross" off />
            <Tool icon="line" />
            <Tool icon="arc" caret />
          </Col>
          <Col $w={28}>
            <Tool icon="gauge" />
            <Tool icon="rect" />
          </Col>
        </Group>
        <Group w={126} title="识别梁" pad={10} shift={-4}>
          <Col $w={82}>
            <Tool icon="idbeam" label="识别梁" off />
            <Tool icon="idb2" off />
            <Tool icon="idb3" off />
          </Col>
          <Col $w={28}>
            <Tool icon="hook" off />
            <Tool icon="boxq" off />
            <Tool icon="tdraw" off />
          </Col>
        </Group>
        <Group w={98} title="智能布置" shift={-2}>
          <BigTool>
            <Svg viewBox="0 0 40 40" $s={44} style={{ marginTop: 2 }}>
              <path d="M3 8h30M3 20h30M3 32h20M14 2v30M27 2v20" strokeWidth="2.4" />
              <circle cx="4" cy="8" r="2.5" />
              <circle cx="4" cy="20" r="2.5" />
              <circle cx="4" cy="32" r="2.5" />
              <path className="b" d="M24 26v-3h4M34 23h4v3M38 34v3h-4M28 37h-4v-3" strokeWidth="2.4" transform="translate(-1 -2)" />
            </Svg>
            <BigToolLabel>智能布置</BigToolLabel>
            <Caret style={{ marginTop: 3 }} />
          </BigTool>
        </Group>
        <Group w={373} title="梁二次编辑" pad={9} shift={-4} caret last>
          <Col $w={40}>
            <ToolRow $gap={2}><Icon name="gen1" /><Caret /></ToolRow>
            <ToolRow $gap={2}><Icon name="gen2" /><Caret /></ToolRow>
            <Tool icon="gen7" />
          </Col>
          <Col $w={30}>
            <Tool icon="gen3" />
            <Tool icon="gen5" />
            <Tool icon="gen8" />
          </Col>
          <Col $w={38}>
            <Tool icon="gen4" />
            <Tool icon="gen6" />
            <ToolRow $gap={2}><Icon name="gen9" /><Caret /></ToolRow>
          </Col>
          <Col $w={125}>
            <Tool icon="haunch" label="生成梁加腋" caret />
            <Tool icon="genhang" label="生成吊筋" />
            <ToolRow $gap={1}><CheckBox>✓</CheckBox>显示吊筋</ToolRow>
          </Col>
          <Col $w={130}>
            <Tool icon="span" label="梁跨分类" />
            <Tool icon="strong" label="生成高强节点" caret />
            <ToolRow $gap={1}><CheckBox>✓</CheckBox>显示高强节点</ToolRow>
          </Col>
        </Group>
      </Ribbon>

      <SelectorBar>
        {[['2层', 105, 1], ['梁', 123], ['梁', 123], ['KL1(1)', 124], ['分层1', 124]].map(([t, w, pl], i) => (
          <Selector key={i} $w={w} $pl={pl}>{t}<Caret $c="#555" /></Selector>
        ))}
      </SelectorBar>

      <Main>
        <Panel $w={204}>
          <Strip><X /></Strip>
          <PanelHead $indent={-11}>导航栏</PanelHead>
          <ViewRow>
            <ViewBtn>
              <BlueSvg viewBox="0 0 24 24"><path d="M8 5h14M8 12h14M8 19h14M2 4h3v3H2zM2 11h3v3H2zM2 18h3v3H2z" /></BlueSvg>
            </ViewBtn>
            <ViewBtn>
              <BlueSvg viewBox="0 0 24 24"><rect x="3" y="3" width="18" height="18" rx="2" /><path d="M7 8h1M10 8h8M7 12h1M10 12h6M7 16h1M10 16h4" /></BlueSvg>
            </ViewBtn>
          </ViewRow>
          <NavList>
            {navTop.map((r, i) =>
              r.item ? (
                <NavItem key={i} $on={r.on}>
                  <BlueSvg viewBox="0 0 24 24" $s={26}>{navIcons[r.icon]}</BlueSvg>
                  {r.item}
                  {r.dot && <RedDot />}
                </NavItem>
              ) : (
                <NavBand key={i} $dark={r.dark} $indent={r.indent}>{r.band}</NavBand>
              )
            )}
          </NavList>
          <ScrollThumb $top={97} $right={4} $h={556} />
        </Panel>

        <MidColumn>
          <Panel $w={305} $h={487}>
            <Strip $h={14}><X /></Strip>
            <Tabs><Tab $on>构件列表</Tab><Tab>图纸管理</Tab></Tabs>
            <CompToolbar>
              <CompBtn $w={80}>
                <Svg viewBox="0 0 24 24" $s={21}><path d="M3 3h11l7 7v11H3z" /><path className="f" d="M2 2h6v6H2z" /></Svg>
                新建<Caret $c="#aaa" />
              </CompBtn>
              <CompBtn $w={72}>
                <Icon name="copy" s={21} />复制
              </CompBtn>
              <CompBtn $w={72}>
                <Icon name="del" s={19} />删除
              </CompBtn>
              <MoreBtn>▸▸</MoreBtn>
            </CompToolbar>
            <CompSearch>
              搜索构件...
              <Svg viewBox="0 0 24 24" $s={14} $off><circle cx="11" cy="11" r="8" /><path d="M17 17l5 5" /></Svg>
            </CompSearch>
            <CompList>
              {compRows.map((t) => <CompRow key={t}>{t}</CompRow>)}
              <CompRow $head><Caret />非框架梁</CompRow>
              <CompRow>L1(1)  {'<1>'}</CompRow>
              <CompRow>TL-2梯梁  {'<1>'}</CompRow>
            </CompList>
            <ScrollThumb $top={238} $right={4} $h={230} />
          </Panel>
          <Panel $w={305} $grow>
            <Strip $h={15}><X /></Strip>
            <Tabs $h={28}><Tab $on>属性列表</Tab><Tab>图层管理</Tab></Tabs>
            <PropHead>
              <div />
              <div>属性名称</div>
              <div>属性值</div>
              <div>附加</div>
            </PropHead>
            {propRows.map((r) => (
              <PropRow key={r.n}>
                <PropNum>{r.n}</PropNum>
                <PropName $link={r.link}>{r.name}</PropName>
                <PropVal>{r.val}</PropVal>
                <PropCheckCell>{r.cb && <PropCheck />}</PropCheckCell>
              </PropRow>
            ))}
            <ScrollThumb $top={60} $right={4} $h={96} />
          </Panel>
        </MidColumn>

        <Splitter $w={4}><SplitGrip /></Splitter>
        <Viewport>
          <Scene3D />
          <FloatBar>
            <FloatSlot $h={34}>
              <Svg viewBox="0 0 26 26" $s={29}><circle cx="13" cy="13" r="9.5" /><path className="b" d="M3 21C1 17 18 4 23 4c3 1 0 7-5 11S4 24 3 21z" strokeWidth="1.6" /></Svg>
            </FloatSlot>
            <FloatSlot $h={40}>
              <Svg viewBox="0 0 26 26" $s={26}><rect x="2" y="1" width="22" height="24" rx="2" /><text x="4" y="21" fontSize="9" fill="#3b8bea" stroke="none" fontWeight="700">2D</text></Svg>
            </FloatSlot>
            <FloatSlot $h={32}><Icon name="logoCube" s={30} /></FloatSlot>
            <FloatSlot $h={16}><Caret $c="#555" /></FloatSlot>
            <FloatSlot $h={34}>
              <Svg viewBox="0 0 24 24" $s={30}><path className="b l" d="M4 8l4-5h13v14l-4 5H4z" /><path className="b" d="M4 8h13v14M17 8l4-5" /></Svg>
            </FloatSlot>
            <FloatSlot $h={14}><Caret $c="#555" /></FloatSlot>
            <FloatSlot $h={34}>
              <Svg viewBox="0 0 24 24" $s={27}><path d="M2 7V2h6M16 2h6v5M22 17v5h-6M8 22H2v-5" /></Svg>
            </FloatSlot>
            <FloatSlot $h={38}>
              <Svg viewBox="0 0 24 24" $s={27}><rect x="2" y="2" width="20" height="20" rx="3" strokeDasharray="2 1.5" /><path className="b" d="M12 6l5 3v6l-5 3-5-3V9zM7 9l5 3 5-3M12 12v6" /></Svg>
            </FloatSlot>
            <FloatRule />
            <FloatSlot $h={32}>
              <Svg viewBox="0 0 24 24" $s={28}><path d="M2 2h20v14M2 2v20h12M6 7h12M6 11h8M6 15h4" /><circle className="b" cx="18" cy="19" r="3.5" /><circle className="f" cx="18" cy="19" r="1.5" /></Svg>
            </FloatSlot>
          </FloatBar>
        </Viewport>
        <Splitter $w={5}><SplitGrip /></Splitter>

        <Panel $w={142} $grow>
          <Strip />
          <PanelHead $pl={10}>显示设置</PanelHead>
          <TabsR>
            <TabR $on>图元显示</TabR>
            <TabR>楼层显示</TabR>
          </TabsR>
          <TreeWrap>
            <TreeHead>
              <TreeCell>图层构件</TreeCell>
              <span>&nbsp;显</span>
            </TreeHead>
            {tree.map(([t, lvl, end], i) => (
              <TreeRow key={i}>
                {lvl === 2 && <TreeV $end={end} />}
                {lvl === 2 && <TreeH />}
                <TreeLabel $pl={lvl === 0 ? 3 : lvl === 1 ? 15 : 50}>
                  {lvl < 2 && <Expander>−</Expander>}
                  {t}
                </TreeLabel>
              </TreeRow>
            ))}
          </TreeWrap>
          <TreeBar><BarArrow /><BarThumb /></TreeBar>
          <RestoreBtn>恢复默认</RestoreBtn>
        </Panel>
      </Main>

      <Status>
        <StatusText $w={31} $indent={-15}>层高:</StatusText>
        <StatusText $w={53}>3.6</StatusText>
        <StatusText $w={51}>标高:</StatusText>
        <StatusText $w={115}>3.8~7.4</StatusText>
        <StatusText $w={129}>选中图元: 0</StatusText>
        <StatusText $w={130}>隐藏图元: 0</StatusText>
        <StatusBtn $w={30}><Svg viewBox="0 0 24 24" $s={20}><path d="M5 3v17h16M5 14h6v6" /></Svg></StatusBtn>
        <StatusBtn $w={45} $on $mr={8}>
          <Svg viewBox="0 0 24 24" $s={20}><rect x="3" y="3" width="18" height="18" rx="3" /><circle className="b" cx="3" cy="3" r="2" /></Svg>
          <Caret $c="#555" />
        </StatusBtn>
        <StatusBtn $w={31} $mr={7}><Svg viewBox="0 0 24 24" $s={22} $off><path d="M3 2l18 20M21 2L3 22" /></Svg></StatusBtn>
        <StatusBtn $w={44} $mr={5}><Svg viewBox="0 0 24 24" $s={20}><path d="M4 20L18 6M4 20h16M9 14l3 6" /></Svg><Caret $c="#555" /></StatusBtn>
        <StatusBtn $w={44} $mr={5}>
          <Svg viewBox="0 0 24 24" $s={20}><path d="M2 5h8M6 1v8" /><rect x="10" y="15" width="12" height="6" className="d" /></Svg>
          <Caret $c="#555" />
        </StatusBtn>
        <StatusBtn $w={30} $mr={5}><Svg viewBox="0 0 24 24" $s={22}><rect x="4" y="3" width="14" height="16" className="d" opacity=".75" /><path d="M18 7h3v8" /><path className="d" d="M16 16l6 3-6 3z" /></Svg></StatusBtn>
        <StatusBtn $w={30}><Svg viewBox="0 0 24 24" $s={22}><path d="M3 22c0-8 4-13 18-17" /><path className="d" d="M15 13l6 4-6 4z" /></Svg></StatusBtn>
        <Hint>
          <Svg viewBox="0 0 24 24" $s={22} style={{ color: '#444' }}><path d="M3 21L21 3M13 3h8v8M11 21H3v-8" /></Svg>
          按鼠标左键指定第一个角点，或拾取构件图元
        </Hint>
      </Status>
    </Page>
  )
}
